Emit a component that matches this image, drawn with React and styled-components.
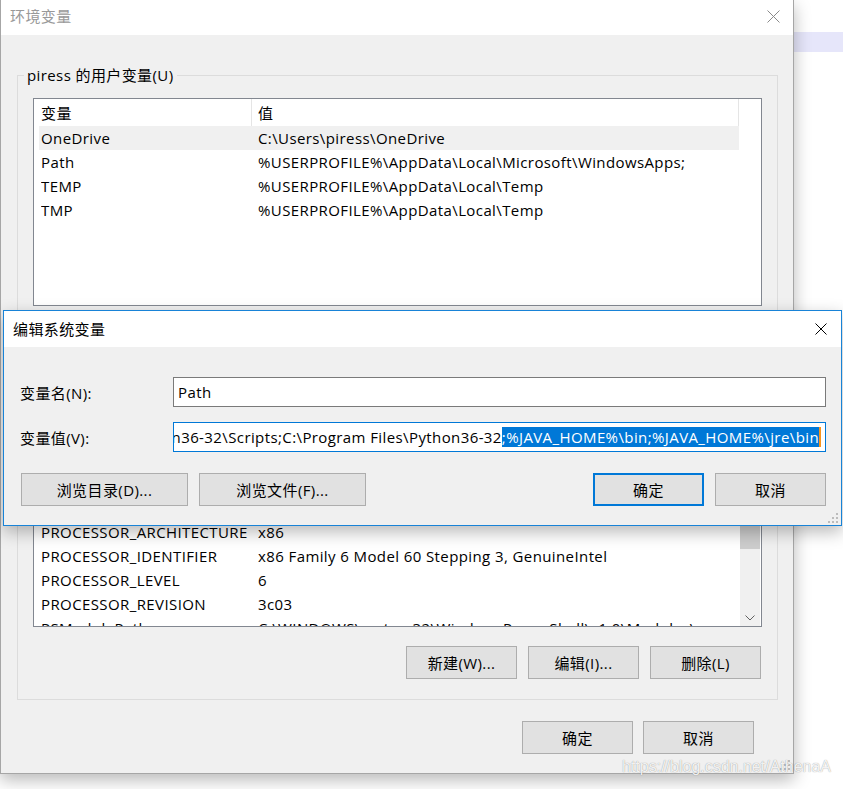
import React from 'react';
import styled, { createGlobalStyle } from 'styled-components';

const UI_FONT = `"Open Sans", "Noto Sans CJK SC", sans-serif`;

const GlobalStyle = createGlobalStyle`
  html, body {
    margin: 0;
    padding: 0;
    background: #fff;
  }
`;

const Desktop = styled.div`
  position: relative;
  width: 843px;
  height: 789px;
  overflow: hidden;
  background:
    linear-gradient(#e6e6fa, #e6e6fa) no-repeat 794px 32px / 49px 20px,
    #fff;
  font-family: ${UI_FONT};
  font-size: 15px;
  letter-spacing: 0.4px;
  color: #000;
`;

/* windows on the desktop */
const Window = styled.div`
  position: absolute;
  left: ${(p) => p.$x}px;
  top: ${(p) => p.$y}px;
  width: ${(p) => p.$w}px;
  box-sizing: border-box;
  display: flex;
  flex-direction: column;
  background: #f0f0f0;
  border: 1px solid ${(p) => (p.$active ? '#1883d7' : '#a6a6a6')};
  border-top-width: ${(p) => (p.$active ? 1 : 0)}px;
  box-shadow: 0 6px 16px rgba(0, 0, 0, 0.28);
`;

const TitleBar = styled.div`
  display: flex;
  align-items: center;
  justify-content: space-between;
  height: ${(p) => p.$h}px;
  padding-left: 9px;
  background: #fff;
  color: ${(p) => (p.$active ? '#000' : '#999')};
  line-height: 20px;
`;

const TitleText = styled.span`
  padding-bottom: ${(p) => p.$lift || 0}px;
`;

const CloseBox = styled.div`
  width: 40px;
  height: 100%;
  display: flex;
  align-items: center;
  justify-content: center;
  padding-bottom: ${(p) => p.$lift || 0}px;
  box-sizing: border-box;
`;

const OuterBody = styled.div`
  display: flex;
  flex-direction: column;
  padding: 30px 15px 19px 16px;
`;

const GroupBox = styled.fieldset`
  display: flex;
  flex-direction: column;
  margin: ${(p) => p.$top || 0}px 0 0;
  padding: 13px 15px ${(p) => p.$bottom}px;
  border: 1px solid #dcdcdc;
  min-inline-size: 0;
`;

const GroupLegend = styled.legend`
  margin-left: -9px;
  padding: 0 3px;
  height: 20px;
  line-height: 20px;
`;

const ListBox = styled.div`
  display: flex;
  height: ${(p) => p.$h}px;
  box-sizing: border-box;
  border: 1px solid #828790;
  background: #fff;
  overflow: hidden;
`;

const ListMain = styled.div`
  flex: 1;
  min-width: 0;
  display: flex;
  flex-direction: column;
  overflow: hidden;
`;

const Gutter = styled.div`
  width: 22px;
  flex: none;
  display: flex;
  justify-content: center;
`;

const HeaderRow = styled.div`
  display: flex;
  flex: none;
  height: 27px;
`;

const HeaderCell = styled.div`
  box-sizing: border-box;
  width: ${(p) => (p.$w ? `${p.$w}px` : 'auto')};
  flex: ${(p) => (p.$w ? 'none' : 1)};
  padding: 3px 0 0 ${(p) => p.$pad}px;
  border-right: 1px solid #e5e5e5;
  line-height: 22px;
`;

const Row = styled.div`
  display: flex;
  align-items: center;
  flex: none;
  height: 24px;
  margin-left: 5px;
  padding-left: 2px;
  white-space: nowrap;
  background: ${(p) => (p.$selected ? '#f0f0f0' : 'transparent')};
`;

const NameCell = styled.div`
  width: 217px;
  flex: none;
  overflow: hidden;
`;

const ValueCell = styled.div`
  flex: 1;
  min-width: 0;
  overflow: hidden;
`;

const ScrollBar = styled.div`
  width: 20px;
  display: flex;
  flex-direction: column;
  background: #f0f0f0;
`;

const ScrollArrow = styled.div`
  height: 17px;
  flex: none;
  display: flex;
  align-items: center;
  justify-content: center;
`;

const ScrollTrack = styled.div`
  flex: 1;
  display: flex;
  flex-direction: column;
`;

const ScrollThumb = styled.div`
  flex: none;
  height: ${(p) => p.$h}px;
  background: #cdcdcd;
`;

const ButtonRow = styled.div`
  display: flex;
  justify-content: ${(p) => p.$justify || 'flex-end'};
  gap: ${(p) => p.$gap ?? 11}px;
  margin-top: ${(p) => p.$top || 0}px;
  padding: 0 ${(p) => p.$right || 0}px 0 ${(p) => p.$left || 0}px;
`;

const ButtonGroup = styled.div`
  display: flex;
  gap: 11px;
`;

const Button = styled.button`
  box-sizing: border-box;
  width: ${(p) => p.$w || 111}px;
  height: 33px;
  padding: 0;
  background: #e1e1e1;
  border: ${(p) => (p.$default ? '2px solid #0078d7' : '1px solid #adadad')};
  border-radius: 0;
  font-family: ${UI_FONT};
  font-size: 15px;
  letter-spacing: 0.4px;
  color: #000;
`;

const DialogBody = styled.div`
  display: flex;
  flex-direction: column;
  padding: 30px 15px 19px 16px;
`;

const FieldGrid = styled.div`
  display: grid;
  grid-template-columns: 153px 1fr;
  row-gap: 15px;
  align-items: center;
`;

const FieldLabel = styled.label`
  line-height: 20px;
  padding-top: 2px;
`;

const TextBox = styled.div`
  box-sizing: border-box;
  height: 30px;
  display: flex;
  align-items: center;
  justify-content: ${(p) => (p.$end ? 'flex-end' : 'flex-start')};
  padding: 0 4px;
  border: 1px solid ${(p) => (p.$focused ? '#0078d7' : '#7a7a7a')};
  background: #fff;
  overflow: hidden;
  white-space: nowrap;
  line-height: 20px;
`;

const TextRun = styled.span`
  flex: none;
  ${(p) => p.$selected && 'background: #0078d7; color: #fff;'}
`;

const Caret = styled.span`
  flex: none;
  width: 2px;
  height: 20px;
  background: #f7941d;
`;

const Grip = styled.svg`
  position: absolute;
  right: ${(p) => p.$r}px;
  bottom: ${(p) => p.$b}px;
`;

const Watermark = styled.div`
  position: absolute;
  left: 622px;
  top: 758px;
  font-family: "Liberation Sans", Arial, sans-serif;
  font-size: 16px;
  line-height: 18px;
  letter-spacing: 0;
  color: rgba(255, 255, 255, 0.9);
  text-shadow: 0 0 1px rgba(0, 0, 0, 0.45);
`;

const CloseIcon = ({ color, size }) => (
  <svg width={size} height={size} viewBox={`0 0 ${size} ${size}`}>
    <path d={`M0.5 0.5L${size - 0.5} ${size - 0.5}M${size - 0.5} 0.5L0.5 ${size - 0.5}`} stroke={color} strokeWidth="1" fill="none" />
  </svg>
);

const GripIcon = (props) => (
  <Grip width="12" height="12" viewBox="0 0 12 12" {...props}>
    {[[9, 1], [5, 5], [9, 5], [1, 9], [5, 9], [9, 9]].map(([x, y]) => (
      <rect key={`${x}-${y}`} x={x} y={y} width="2" height="2" fill="#bcbcbc" />
    ))}
  </Grip>
);

const userVars = [
  ['OneDrive', 'C:\\Users\\piress\\OneDrive'],
  ['Path', '%USERPROFILE%\\AppData\\Local\\Microsoft\\WindowsApps;'],
  ['TEMP', '%USERPROFILE%\\AppData\\Local\\Temp'],
  ['TMP', '%USERPROFILE%\\AppData\\Local\\Temp'],
];

const systemVars = [
  ['NUMBER_OF_PROCESSORS', '4'],
  ['OS', 'Windows_NT'],
  ['Path', 'C:\\Program Files\\Python36-32\\Scripts;C:\\Program Files\\Python36-32'],
  ['PATHEXT', '.COM;.EXE;.BAT;.CMD;.VBS;.VBE;.JS;.JSE;.WSF;.WSH;.MSC;.PY'],
  ['PROCESSOR_ARCHITECTURE', 'x86'],
  ['PROCESSOR_IDENTIFIER', 'x86 Family 6 Model 60 Stepping 3, GenuineIntel'],
  ['PROCESSOR_LEVEL', '6'],
  ['PROCESSOR_REVISION', '3c03'],
  ['PSModulePath', 'C:\\WINDOWS\\system32\\WindowsPowerShell\\v1.0\\Modules\\'],
  ['TEMP', 'C:\\WINDOWS\\TEMP'],
];

const VarList = ({ rows, height, selected, scroll }) => (
  <ListBox $h={height}>
    <ListMain>
      <HeaderRow>
        <HeaderCell $w={218} $pad={7}>变量</HeaderCell>
        <HeaderCell $pad={6}>值</HeaderCell>
      </HeaderRow>
      {rows.map(([name, value], i) => (
        <Row key={name + i} $selected={i === selected}>
          <NameCell>{name}</NameCell>
          <ValueCell>{value}</ValueCell>
        </Row>
      ))}
    </ListMain>
    <Gutter>
      {scroll && (
        <ScrollBar>
          <ScrollArrow>
            <svg width="10" height="6" viewBox="0 0 10 6">
              <path d="M0.5 5.5L5 1L9.5 5.5" stroke="#606060" fill="none" />
            </svg>
          </ScrollArrow>
          <ScrollTrack>
            <ScrollThumb $h={135} />
          </ScrollTrack>
          <ScrollArrow>
            <svg width="10" height="6" viewBox="0 0 10 6">
              <path d="M0.5 0.5L5 5L9.5 0.5" stroke="#606060" fill="none" />
            </svg>
          </ScrollArrow>
        </ScrollBar>
      )}
    </Gutter>
  </ListBox>
);

export default function App() {
  return (
    <>
      <GlobalStyle />
      <Desktop>
        <Window $x={0} $y={0} $w={794}>
          <TitleBar $h={35}>
            <TitleText $lift={3}>环境变量</TitleText>
            <CloseBox $lift={2}>
              <CloseIcon color="#8a8a8a" size={13} />
            </CloseBox>
          </TitleBar>
          <OuterBody>
            <GroupBox $bottom={8}>
              <GroupLegend>piress 的用户变量(U)</GroupLegend>
              <VarList rows={userVars} height={208} selected={0} />
              <ButtonRow $top={8} $right={1}>
                <Button>新建(N)...</Button>
                <Button>编辑(E)...</Button>
                <Button>删除(D)</Button>
              </ButtonRow>
            </GroupBox>
            <GroupBox $top={7} $bottom={20}>
              <GroupLegend>系统变量(S)</GroupLegend>
              <VarList rows={systemVars} height={231} scroll />
              <ButtonRow $top={19} $right={1}>
                <Button>新建(W)...</Button>
                <Button>编辑(I)...</Button>
                <Button>删除(L)</Button>
              </ButtonRow>
            </GroupBox>
            <ButtonRow $top={21} $right={24} $gap={10}>
              <Button>确定</Button>
              <Button>取消</Button>
            </ButtonRow>
          </OuterBody>
          <GripIcon $r={2} $b={2} />
        </Window>

        <Window $x={3} $y={310} $w={839} $active>
          <TitleBar $h={36} $active>
            <TitleText $lift={1}>编辑系统变量</TitleText>
            <CloseBox>
              <CloseIcon color="#000" size={12} />
            </CloseBox>
          </TitleBar>
          <DialogBody>
            <FieldGrid>
              <FieldLabel>变量名(N):</FieldLabel>
              <TextBox>
                <TextRun>Path</TextRun>
              </TextBox>
              <FieldLabel>变量值(V):</FieldLabel>
              <TextBox $focused $end>
                <TextRun>C:\Program Files\Python36-32\Scripts;C:\Program Files\Python36-32</TextRun>
                <TextRun $selected>;%JAVA_HOME%\bin;%JAVA_HOME%\jre\bin</TextRun>
                <Caret />
              </TextBox>
            </FieldGrid>
            <ButtonRow $top={21} $justify="space-between" $left={1}>
              <ButtonGroup>
                <Button $w={167}>浏览目录(D)...</Button>
                <Button $w={167}>浏览文件(F)...</Button>
              </ButtonGroup>
              <ButtonGroup>
                <Button $default>确定</Button>
                <Button>取消</Button>
              </ButtonGroup>
            </ButtonRow>
          </DialogBody>
          <GripIcon $r={2} $b={1} />
        </Window>

        <Watermark>https://blog.csdn.net/AthenaA</Watermark>
      </Desktop>
    </>
  );
}
